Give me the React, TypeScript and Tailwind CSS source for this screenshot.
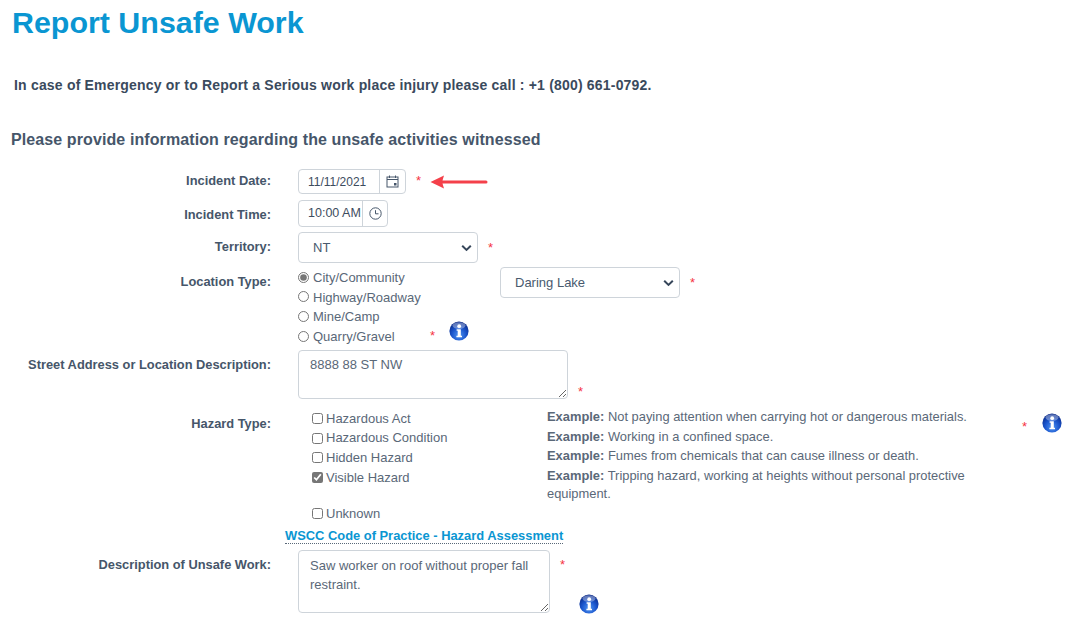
import React from "react";

const Star = ({ className = "" }: { className?: string }) => (
  <span className={"text-[13px] leading-none text-[#f5333f] " + className}>*</span>
);

const Info = ({ id, className = "" }: { id: string; className?: string }) => (
  <svg width="20" height="20" viewBox="0 0 20 20" className={"block shrink-0 " + className}>
    <defs>
      <radialGradient id={id} cx="50%" cy="72%" r="68%">
        <stop offset="0%" stopColor="#4f94f2" />
        <stop offset="55%" stopColor="#1a55cc" />
        <stop offset="100%" stopColor="#0a2a8a" />
      </radialGradient>
    </defs>
    <circle cx="10" cy="10" r="9.6" fill={`url(#${id})`} />
    <ellipse cx="10" cy="4.6" rx="6.5" ry="3.4" fill="#ffffff" opacity="0.35" />
    <circle cx="10.2" cy="5.2" r="1.9" fill="#ffffff" />
    <path d="M7.6 8.2h4.2v6.6h1.2v1.5H7.4v-1.5h1.3V9.7H7.6z" fill="#ffffff" />
  </svg>
);

const Chevron = () => (
  <svg width="11" height="7" viewBox="0 0 11 7" className="pointer-events-none absolute right-[6px] top-1/2 -translate-y-1/2">
    <path d="M1.2 1.2L5.5 5.4L9.8 1.2" fill="none" stroke="#36465a" strokeWidth="2" />
  </svg>
);

const Select = ({ value, className }: { value: string; className: string }) => (
  <div className={"relative " + className}>
    <select
      defaultValue={value}
      className="h-full w-full appearance-none rounded-[4px] border border-[#ced4da] bg-white pl-[14px] text-[13px] text-[#495a6e] outline-none"
    >
      <option>{value}</option>
    </select>
    <Chevron />
  </div>
);

const Row = ({
  label,
  labelPt,
  className = "",
  children,
}: {
  label: string;
  labelPt: string;
  className?: string;
  children: React.ReactNode;
}) => (
  <div className={"flex " + className}>
    <div className={"w-[271px] shrink-0 text-right text-[12.85px] font-bold leading-[14px] text-[#46566a] " + labelPt}>
      {label}
    </div>
    <div className="ml-[27px] flex-1">{children}</div>
  </div>
);

const Radio = ({ label, checked, h }: { label: string; checked?: boolean; h: string }) => (
  <label className={"flex items-center " + h}>
    <input
      type="radio"
      name="location"
      defaultChecked={checked}
      className="m-0 mb-[2px] h-[11px] w-[11px] accent-[#767676]"
    />
    <span className="ml-[4px]">{label}</span>
  </label>
);

const Check = ({ label, checked, h }: { label: string; checked?: boolean; h: string }) => (
  <label className={"flex items-center " + h}>
    <input type="checkbox" defaultChecked={checked} className="m-0 h-[11px] w-[11px] accent-[#767676]" />
    <span className="ml-[3px]">{label}</span>
  </label>
);

const Example = ({ text, className = "mb-[1px]" }: { text: string; className?: string }) => (
  <p className={"text-[12.9px] leading-[18px] " + className}>
    <b className="font-bold">Example:</b> {text}
  </p>
);

export default function App() {
  return (
    <div
      className="h-[622px] w-[1072px] overflow-hidden bg-white text-[13px] text-[#5a6878]"
      style={{ fontFamily: '"Liberation Sans", Arial, sans-serif' }}
    >
      <h1 className="pl-[12px] text-[30.4px] font-bold leading-[45px] text-[#0a96d2]">Report Unsafe Work</h1>
      <p className="mt-[32px] pl-[14px] text-[14px] font-bold leading-[16px] tracking-[0.19px] text-[#3a4a5d]">
        In case of Emergency or to Report a Serious work place injury please call : +1 (800) 661-0792.
      </p>
      <h2 className="mt-[38px] pl-[11px] text-[16px] font-bold leading-[18px] tracking-[0.1px] text-[#46566a]">
        Please provide information regarding the unsafe activities witnessed
      </h2>

      <form className="mt-[20px]">
        <Row label="Incident Date:" labelPt="pt-[5px]" className="h-[25px]">
          <div className="flex items-start">
            <div className="flex h-[25px] w-[108px] rounded-[4px] border border-[#ced4da]">
              <input
                readOnly
                value="11/11/2021"
                className="w-[81px] border-r border-[#ced4da] pl-[9px] text-[12px] text-[#3d4c5e] outline-none"
              />
              <div className="flex flex-1 items-center justify-center">
                <svg width="13" height="13" viewBox="0 0 13 13" fill="none" stroke="#46566a">
                  <rect x="1" y="2" width="11" height="10" />
                  <path d="M1 4.5h11M3.5 0.5v2.5M9.5 0.5v2.5" />
                  <rect x="8" y="8" width="2.5" height="2.5" fill="#46566a" stroke="none" />
                </svg>
              </div>
            </div>
            <Star className="ml-[10px] mt-[5px]" />
            <svg width="58" height="14" viewBox="0 0 58 14" className="ml-[9px] mt-[6px]">
              <path d="M0.5 7L14 0.5L12.5 5.5H56a1.5 1.5 0 0 1 0 3H12.5L14 13.5z" fill="#f4404a" />
            </svg>
          </div>
        </Row>

        <Row label="Incident Time:" labelPt="pt-[8px]" className="mt-[6px] h-[27px]">
          <div className="flex h-[27px] w-[90px] rounded-[4px] border border-[#ced4da]">
            <input
              readOnly
              value="10:00 AM"
              className="w-[64px] border-r border-[#ced4da] pl-[9px] text-[12.5px] text-[#3d4c5e] outline-none"
            />
            <div className="flex flex-1 items-center justify-center">
              <svg width="13" height="13" viewBox="0 0 13 13" fill="none" stroke="#46566a">
                <circle cx="6.5" cy="6.5" r="5.7" />
                <path d="M6.5 3.2v3.6h3" />
              </svg>
            </div>
          </div>
        </Row>

        <Row label="Territory:" labelPt="pt-[8px]" className="mt-[5px] h-[31px]">
          <div className="flex items-start">
            <Select value="NT" className="h-[31px] w-[180px]" />
            <Star className="ml-[10px] mt-[9px]" />
          </div>
        </Row>

        <Row label="Location Type:" labelPt="pt-[8px]" className="mt-[4px] h-[83px]">
          <div className="flex items-start">
            <div className="w-[202px] pt-[1px]">
              <Radio label="City/Community" checked h="h-[20px]" />
              <Radio label="Highway/Roadway" h="h-[19px]" />
              <Radio label="Mine/Camp" h="h-[20px]" />
              <div className="flex h-[20px] items-start">
                <div className="w-[132px]">
                  <Radio label="Quarry/Gravel" h="h-[20px]" />
                </div>
                <Star className="mt-[2px]" />
                <Info id="info-location" className="ml-[14px] -mt-[6px]" />
              </div>
            </div>
            <Select value="Daring Lake" className="h-[31px] w-[180px]" />
            <Star className="ml-[10px] mt-[9px]" />
          </div>
        </Row>

        <Row label="Street Address or Location Description:" labelPt="pt-[8px]" className="h-[49px]">
          <div className="flex items-end">
            <textarea
              readOnly
              defaultValue="8888 88 ST NW"
              className="h-[49px] w-[270px] rounded-[4px] border border-[#ced4da] px-[11px] py-[5px] text-[13px] leading-[18px] text-[#5a6878] outline-none"
            />
            <Star className="mb-[1px] ml-[10px]" />
          </div>
        </Row>

        <Row label="Hazard Type:" labelPt="pt-[8px]" className="mt-[10px] h-[114px]">
          <div className="flex items-start">
            <div className="ml-[14px] w-[235px]">
              <Check label="Hazardous Act" h="h-[19px]" />
              <Check label="Hazardous Condition" h="h-[20px]" />
              <Check label="Hidden Hazard" h="h-[19px]" />
              <Check label="Visible Hazard" checked h="h-[21px]" />
              <div className="h-[16px]" />
              <Check label="Unknown" h="h-[19px]" />
            </div>
            <div className="w-[430px] -mt-[1px]">
              <Example text="Not paying attention when carrying hot or dangerous materials." className="mb-[2px]" />
              <Example text="Working in a confined space." />
              <Example text="Fumes from chemicals that can cause illness or death." />
              <Example text="Tripping hazard, working at heights without personal protective equipment." className="pt-[1px]" />
            </div>
            <Star className="ml-[45px] mt-[11px]" />
            <Info id="info-hazard" className="ml-[15px] mt-[4px]" />
          </div>
        </Row>

        <div className="mt-[5px] pl-[285px] text-[12.9px] leading-[16px]">
          <a className="border-b border-dotted border-[#5a6878] font-bold text-[#0a96d2]">
            WSCC Code of Practice - Hazard Assessment
          </a>
        </div>

        <Row label="Description of Unsafe Work:" labelPt="pt-[8px]" className="mt-[6px] h-[63px]">
          <div className="flex items-start">
            <textarea
              readOnly
              defaultValue="Saw worker on roof without proper fall restraint."
              className="h-[63px] w-[252px] rounded-[4px] border border-[#ced4da] px-[11px] py-[5px] text-[13px] leading-[19px] text-[#5a6878] outline-none"
            />
            <Star className="ml-[10px] mt-[8px]" />
            <Info id="info-description" className="ml-[14px] mt-[44px]" />
          </div>
        </Row>
      </form>
    </div>
  );
}
